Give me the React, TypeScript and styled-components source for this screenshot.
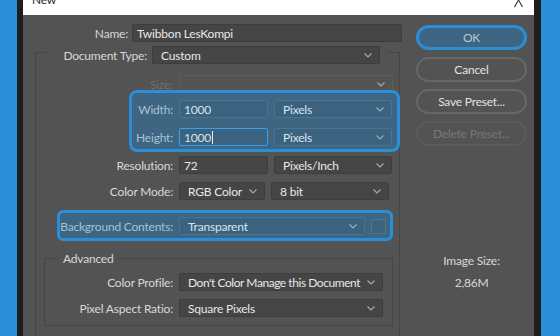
import React from "react";
import styled, { createGlobalStyle, css } from "styled-components";

const GlobalStyle = createGlobalStyle`
  html, body {
    margin: 0;
    padding: 0;
    background: #2b8fd6;
  }
  body {
    font-family: Lato, "Liberation Sans", sans-serif;
    font-size: 12px;
    letter-spacing: -0.2px;
  }
`;

const BLUE = "#2b8fd8";

const Screen = styled.div`
  width: 560px;
  height: 336px;
  overflow: hidden;
  background: ${BLUE};
  display: flex;
`;

const Frame = styled.div`
  margin-left: 17px;
  width: 511px;
  border-left: 6px solid #1e1e1e;
  border-right: 7px solid #1e1e1e;
  display: flex;
  flex-direction: column;
  overflow: hidden;
`;

const TitleBar = styled.div`
  height: 15px;
  flex: none;
  background: #ffffff;
  display: flex;
  align-items: flex-start;
  justify-content: space-between;
  padding: 0 11px 0 9px;
  overflow: hidden;
`;

const Title = styled.span`
  color: #2a2a2a;
  font-size: 12px;
  line-height: 12px;
  margin-top: -6px;
`;

const Body = styled.div`
  flex: 1;
  background: #535353;
  display: flex;
  overflow: hidden;
`;

const FormArea = styled.div`
  width: 382px;
  flex: none;
  padding-top: 9px;
`;

const Side = styled.div`
  flex: 1;
  padding: 10px 0 0 11px;
  display: flex;
  flex-direction: column;
  gap: 7px;
`;

const Row = styled.div<{ $gap?: number; $top?: number }>`
  display: flex;
  align-items: center;
  height: 18px;
  gap: ${(p) => p.$gap ?? 6}px;
  margin-top: ${(p) => p.$top ?? 0}px;
`;

const Label = styled.span<{ $w: number; $tone?: "normal" | "dim" | "blue" }>`
  width: ${(p) => p.$w}px;
  flex: none;
  text-align: right;
  white-space: nowrap;
  color: ${(p) =>
    p.$tone === "dim" ? "#6f6f6f" : p.$tone === "blue" ? "#a6c2d6" : "#d8d8d8"};
`;

const Field = styled.div<{
  $w: number;
  $kind?: "normal" | "blue" | "disabled" | "focus";
}>`
  width: ${(p) => p.$w}px;
  height: 18px;
  box-sizing: border-box;
  flex: none;
  display: flex;
  align-items: center;
  justify-content: space-between;
  padding: 0 7px 0 4px;
  border-radius: 2px;
  color: #e8e8e8;
  white-space: nowrap;
  overflow: hidden;
  background: #454545;
  border: 1px solid #3d3d3d;
  ${(p) =>
    p.$kind === "blue" &&
    css`
      background: #3b627e;
      border-color: #4b7290;
      color: #d9e5ee;
    `}
  ${(p) =>
    p.$kind === "focus" &&
    css`
      background: #3b627e;
      border-color: #3aa0ee;
      color: #d9e5ee;
      justify-content: flex-start;
    `}
  ${(p) =>
    p.$kind === "disabled" &&
    css`
      background: transparent;
      border-color: #5c5c5c;
    `}
`;

const SelectText = styled.span<{ $tight?: boolean }>`
  padding-left: 4px;
  letter-spacing: ${(p) => (p.$tight ? "-0.45px" : "inherit")};
`;

const Caret = styled.span`
  display: inline-block;
  width: 1px;
  height: 13px;
  background: #e8eef3;
  margin-left: 1px;
`;

const Chevron = ({ color = "#a9a9a9" }: { color?: string }) => (
  <svg width="8" height="5" viewBox="0 0 8 5" style={{ flex: "none" }}>
    <polyline points="0.5,0.5 4,4 7.5,0.5" fill="none" stroke={color} strokeWidth="1.2" />
  </svg>
);

const Select = ({
  w,
  kind,
  tight,
  children,
}: {
  w: number;
  kind?: "normal" | "blue" | "disabled";
  tight?: boolean;
  children?: React.ReactNode;
}) => (
  <Field $w={w} $kind={kind}>
    <SelectText $tight={tight}>{children}</SelectText>
    <Chevron color={kind === "blue" ? "#8fb0c8" : "#a9a9a9"} />
  </Field>
);

const Group = styled.fieldset`
  margin: -1px 0 0 12px;
  padding: 0 0 30px 0;
  width: 365px;
  box-sizing: border-box;
  border: 1px solid #474747;
  min-width: 0;
`;

const GroupLegend = styled.legend`
  margin-left: 10px;
  padding: 5px 7px 0 16px;
  display: flex;
  align-items: center;
  gap: 5px;
  height: 18px;
  box-sizing: content-box;
`;

const Highlight = styled.div<{ $left: number; $w: number; $radius: number }>`
  position: relative;
  margin-left: ${(p) => p.$left}px;
  width: ${(p) => p.$w}px;
  box-sizing: border-box;
  border: 3px solid ${BLUE};
  border-radius: ${(p) => p.$radius}px;
  background: #3e6581;
`;

const DimensionBox = styled(Highlight)`
  margin-top: -3px;
  padding: 7px 0 3px 0;
  display: flex;
  flex-direction: column;
  gap: 10px;
`;

const BackgroundBox = styled(Highlight)`
  margin-top: 10px;
  padding: 4px 0 3px 0;
`;

const Swatch = styled.div`
  width: 15px;
  height: 15px;
  box-sizing: border-box;
  border: 1px solid #4d7590;
  background: #3c6480;
  flex: none;
`;

const Advanced = styled.fieldset`
  margin: 10px 0 0 8px;
  padding: 0 0 8px 0;
  width: 349px;
  box-sizing: border-box;
  border: 1px solid #474747;
  min-width: 0;
`;

const AdvancedLegend = styled.legend`
  margin-left: 14px;
  padding: 0 4px;
  color: #d8d8d8;
  line-height: 15px;
`;

const Button = styled.div<{ $kind?: "primary" | "normal" | "disabled" }>`
  width: 111px;
  height: 25px;
  box-sizing: border-box;
  border-radius: 13px;
  display: flex;
  align-items: center;
  justify-content: center;
  font-size: 12px;
  color: #e2e2e2;
  border: 2px solid #676767;
  ${(p) =>
    p.$kind === "primary" &&
    css`
      border: 3px solid ${BLUE};
      background: #3e6581;
      color: #b7cadb;
    `}
  ${(p) =>
    p.$kind === "disabled" &&
    css`
      border-color: #5b5b5b;
      color: #777777;
    `}
`;

const ImageSize = styled.div`
  margin-top: 100px;
  width: 111px;
  display: flex;
  flex-direction: column;
  align-items: center;
  gap: 7px;
  color: #d8d8d8;
`;

const CloseIcon = () => (
  <svg width="9" height="8" viewBox="0 0 9 8" style={{ flex: "none" }}>
    <line x1="0.5" y1="7" x2="4.5" y2="0" stroke="#333" strokeWidth="1.1" />
    <line x1="8.5" y1="7" x2="4.5" y2="0" stroke="#333" strokeWidth="1.1" />
  </svg>
);

export default function App() {
  return (
    <>
      <GlobalStyle />
      <Screen>
        <Frame>
          <TitleBar>
            <Title>New</Title>
            <CloseIcon />
          </TitleBar>
          <Body>
            <FormArea>
              <Row $gap={4}>
                <Label $w={105}>Name:</Label>
                <Field $w={270}>Twibbon LesKompi</Field>
              </Row>
              <Group>
                <GroupLegend>
                  <Label $w={85}>Document Type:</Label>
                  <Select w={228}>Custom</Select>
                </GroupLegend>
                <Row $top={11}>
                  <Label $w={137} $tone="dim">
                    Size:
                  </Label>
                  <Select w={214} kind="disabled" />
                </Row>
                <DimensionBox $left={93} $w={271} $radius={8}>
                  <Row>
                    <Label $w={41} $tone="blue">
                      Width:
                    </Label>
                    <Field $w={89} $kind="blue">
                      1000
                    </Field>
                    <Select w={118} kind="blue">
                      Pixels
                    </Select>
                  </Row>
                  <Row>
                    <Label $w={41} $tone="blue">
                      Height:
                    </Label>
                    <Field $w={89} $kind="focus">
                      1000
                      <Caret />
                    </Field>
                    <Select w={118} kind="blue">
                      Pixels
                    </Select>
                  </Row>
                </DimensionBox>
                <Row $top={4}>
                  <Label $w={137}>Resolution:</Label>
                  <Field $w={89}>72</Field>
                  <Select w={118}>Pixels/Inch</Select>
                </Row>
                <Row $top={8} $gap={6}>
                  <Label $w={137}>Color Mode:</Label>
                  <Select w={86}>RGB Color</Select>
                  <Select w={118}>8 bit</Select>
                </Row>
                <BackgroundBox $left={21} $w={336} $radius={6}>
                  <Row>
                    <Label $w={113} $tone="blue">
                      Background Contents:
                    </Label>
                    <Select w={186} kind="blue">
                      Transparent
                    </Select>
                    <Swatch />
                  </Row>
                </BackgroundBox>
                <Advanced>
                  <AdvancedLegend>Advanced</AdvancedLegend>
                  <Row $top={7}>
                    <Label $w={128}>Color Profile:</Label>
                    <Select w={204} tight>
                      Don't Color Manage this Document
                    </Select>
                  </Row>
                  <Row $top={8}>
                    <Label $w={128}>Pixel Aspect Ratio:</Label>
                    <Select w={204}>Square Pixels</Select>
                  </Row>
                </Advanced>
              </Group>
            </FormArea>
            <Side>
              <Button $kind="primary">OK</Button>
              <Button>Cancel</Button>
              <Button>Save Preset...</Button>
              <Button $kind="disabled">Delete Preset...</Button>
              <ImageSize>
                <span>Image Size:</span>
                <span>2,86M</span>
              </ImageSize>
            </Side>
          </Body>
        </Frame>
      </Screen>
    </>
  );
}
